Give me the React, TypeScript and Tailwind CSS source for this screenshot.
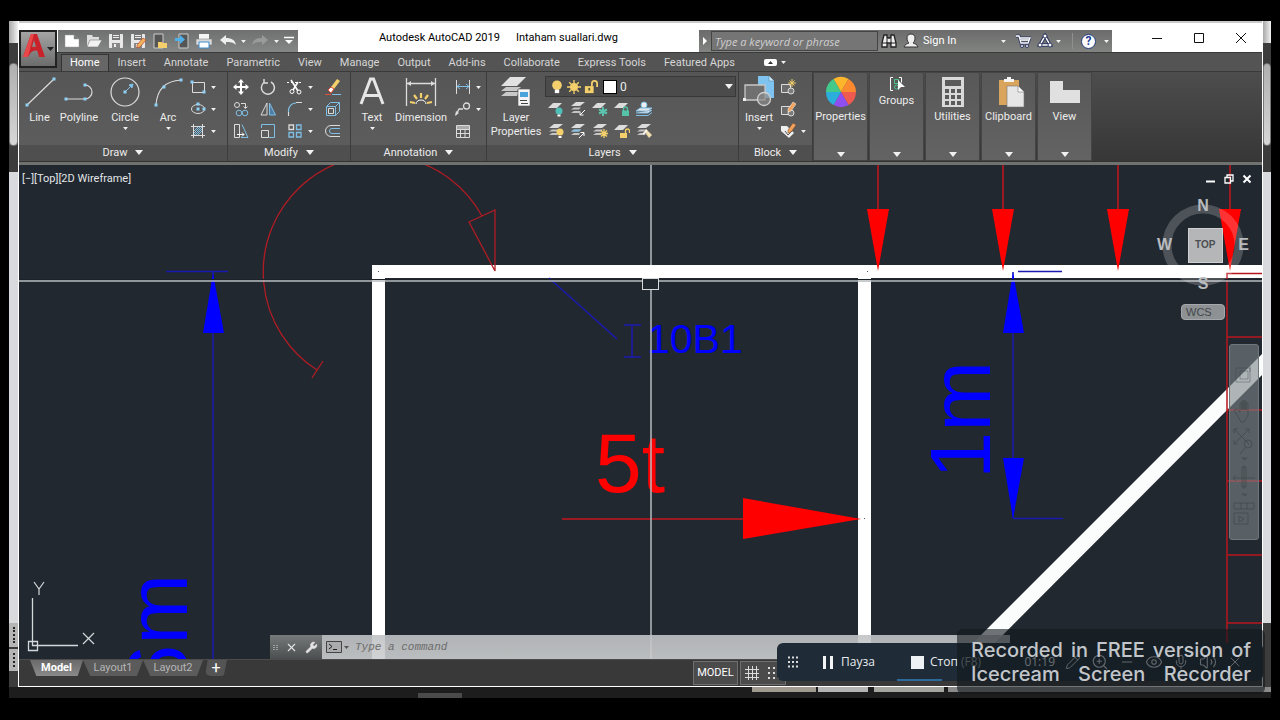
import { ReactNode } from "react";
import { Eye, Mic, Minus, Pencil, Volume2, Wrench, X, ZoomIn } from "lucide-react";

const LIGHT = "#dcdcdc";
const BLUE = "#7fbfe6";
const YELLOW = "#f5cf6b";

function Icon({
  size = 16,
  box = size,
  children,
}: {
  size?: number;
  box?: number;
  children: ReactNode;
}) {
  return (
    <svg
      width={size}
      height={size}
      viewBox={`0 0 ${box} ${box}`}
      fill="none"
      stroke={LIGHT}
      strokeWidth="1"
      className="shrink-0"
      aria-hidden="true"
    >
      {children}
    </svg>
  );
}

function Caret({ wide = false }: { wide?: boolean }) {
  return (
    <svg
      width={wide ? 8 : 5}
      height={wide ? 5 : 3}
      viewBox="0 0 8 5"
      className="shrink-0"
      aria-hidden="true"
    >
      <path d="M0 0h8L4 5z" fill="#f2f2f2" />
    </svg>
  );
}

/* ---------- quick access icons ---------- */

const floppy = (
  <>
    <path d="M1.500 1.500h13v13h-13z" fill="#e8e8e8" stroke="#e8e8e8" />
    <path d="M4 1h8v6H4z" fill="#777" stroke="none" />
    <path d="M5 2.500h6M5 4.500h6" stroke="#eee" />
    <path d="M4 10h8v5H4z" fill="#888" stroke="none" />
    <path d="M6 11h2v3H6z" fill="#eee" stroke="none" />
  </>
);

const quickIcons = [
  {
    label: "New",
    icon: <path d="M1 2h9l5 4v8H1z M10 2v4h5" fill="#fff" stroke="#999" strokeWidth=".5" />,
  },
  {
    label: "Open",
    icon: (
      <>
        <path d="M1 13V2h5l1 2h6v3" fill="#ddd" stroke="none" />
        <path d="M1 14l3-7h12l-4 7z" fill="#f2f2f2" stroke="#777" strokeWidth=".6" />
      </>
    ),
  },
  { label: "Save", icon: floppy },
  {
    label: "Save As",
    icon: (
      <>
        {floppy}
        <path d="M7 12l6-7 3 2-6 7-3 1z" fill="#f2b25c" stroke="#b5462f" strokeWidth=".7" />
      </>
    ),
  },
  {
    label: "Open from mobile",
    icon: (
      <>
        <path d="M2 1h9v14H2z" fill="#555" stroke="#ccc" />
        <path d="M6 9h4l1 1h4v5H6z" fill={YELLOW} stroke="none" />
      </>
    ),
  },
  {
    label: "Save to mobile",
    icon: (
      <>
        <path d="M5 1h9v14H5z" fill="#555" stroke="#ccc" />
        <path d="M1 5h5V2l5 4.500L6 11V8H1z" fill="#4fb0ea" stroke="none" />
      </>
    ),
  },
  {
    label: "Plot",
    icon: (
      <>
        <path d="M3 1h10v5H3z" fill="#f5f5f5" stroke="none" />
        <path d="M0 6h16v6H0z" fill="#d8d8d8" stroke="#777" strokeWidth=".5" />
        <path d="M3 9h10v6H3z" fill="#fff" stroke="#3f8fd0" />
      </>
    ),
  },
];

/* ---------- ribbon icons ---------- */

const node = (x: number, y: number) => (
  <rect x={x - 1.5} y={y - 1.5} width="3" height="3" fill="#8fd0f5" stroke="none" />
);

const lineIcon = (
  <Icon size={32}>
    <path d="M3 29L30 3" strokeWidth="1.200" />
    {node(3, 29)}
    {node(30, 3)}
  </Icon>
);
const polylineIcon = (
  <Icon size={32}>
    <path d="M3 23h19M22 23a7 7 0 0 0 0-14" strokeWidth="1.200" />
    {node(3, 23)}
    {node(22, 23)}
    {node(22, 9)}
  </Icon>
);
const circleIcon = (
  <Icon size={32}>
    <circle cx="16" cy="16" r="14" strokeWidth="1.200" />
    <path d="M16 16l6-6" stroke={BLUE} />
    <path d="M24 8l-1 4-3-3z" fill={BLUE} stroke={BLUE} />
    {node(16, 16)}
  </Icon>
);
const arcIcon = (
  <Icon size={32}>
    <path d="M4 29C5 14 12 5 29 4" strokeWidth="1.200" />
    {node(4, 29)}
    {node(12, 11)}
    {node(29, 4)}
  </Icon>
);

const drawTools = [
  {
    label: "Rectangle",
    icon: (
      <>
        <path d="M2.500 3.500h12v10h-12z" />
        {node(2, 3)}
        {node(14, 13)}
      </>
    ),
  },
  {
    label: "Ellipse",
    icon: (
      <>
        <ellipse cx="8" cy="8" rx="6.500" ry="4.500" />
        {node(8, 8)}
        {node(14, 8)}
        {node(8, 3)}
      </>
    ),
  },
  {
    label: "Hatch",
    icon: (
      <>
        <path d="M3.500 1v14M12.500 1v14M1 3.500h14M1 12.500h14" />
        <path d="M4 8l4-4M4 12l8-8M8 12l4-4M4 10l6-6M6 12l6-6" stroke={BLUE} />
      </>
    ),
  },
];

const modifyTools = [
  {
    label: "Move",
    icon: (
      <path
        d="M8 0l3 3.500H9V7h3.500V5L16 8l-3.500 3V9H9v3.500h2L8 16l-3-3.500h2V9H3.500v2L0 8l3.500-3v2H7V3.500H5z"
        fill="#fff"
        stroke="none"
      />
    ),
  },
  {
    label: "Rotate",
    icon: <path d="M4 3.500A6.500 6.500 0 1 0 11 3M4 0v4h4" strokeWidth="1.500" />,
  },
  {
    label: "Trim",
    caret: true,
    icon: (
      <>
        <path d="M0 3.500h15" strokeDasharray="2 2" stroke="#fff" />
        <path d="M4 1l7 11M11 3L6 11" stroke="#fff" strokeWidth="1.600" />
        <circle cx="5" cy="12.500" r="2" stroke="#fff" />
        <circle cx="12" cy="13" r="2" stroke="#fff" />
      </>
    ),
  },
  {
    label: "Erase",
    icon: (
      <>
        <path d="M6 8l6-8 3 2-6 8z" fill={YELLOW} stroke="none" />
        <path d="M3 11l3-3 3 2-3 4z" fill="#fff" stroke="#e0503c" />
        <path d="M0 15.500h6" stroke="#e0503c" />
        <path d="M7 15.500h9" stroke={BLUE} />
      </>
    ),
  },
  {
    label: "Copy",
    icon: (
      <>
        <circle cx="4" cy="4" r="2.500" />
        <circle cx="6" cy="12" r="2.800" stroke={BLUE} />
        <circle cx="12" cy="12" r="2.800" stroke={BLUE} />
        <path d="M8 2.500h4.500V7M10.500 5.500l2 2 2-2" />
      </>
    ),
  },
  {
    label: "Mirror",
    icon: (
      <>
        <path d="M7 2v12H1z" />
        <path d="M9.500 2v12h6z" stroke={BLUE} fill="#4c7fa3" />
      </>
    ),
  },
  {
    label: "Fillet",
    caret: true,
    icon: (
      <>
        <path d="M1.500 15V10C1.500 5 5 2 9 2" stroke={BLUE} strokeWidth="1.200" />
        <path d="M9 1.500h6M1.500 15v-4" />
      </>
    ),
  },
  {
    label: "Explode",
    icon: (
      <>
        <path d="M1.500 5.500h9v9h-9zM1.500 5.500l4-4h9l-4 4M14.500 1.500v9l-4 4" stroke={BLUE} />
        <path d="M3.500 7.500h5v5h-5z" />
      </>
    ),
  },
  {
    label: "Stretch",
    icon: (
      <>
        <path d="M1.500 1.500h5v13h-5z" />
        <path d="M9 1.500l6 13H8" stroke={BLUE} />
        <path d="M4 11.500h7M9 9.500l2 2-2 2" stroke="#fff" />
      </>
    ),
  },
  {
    label: "Scale",
    icon: (
      <>
        <path d="M1.500 5V1.500h13v13H9" stroke={BLUE} />
        <path d="M1.500 7.500h7v7h-7z" />
      </>
    ),
  },
  {
    label: "Array",
    caret: true,
    icon: (
      <>
        <path d="M2 2h4.500v4.500H2z" strokeWidth="1.300" />
        <path d="M9.500 2H14v4.500H9.500zM2 9.500h4.500V14H2zM9.500 9.500H14V14H9.500z" stroke={BLUE} strokeWidth="1.300" />
      </>
    ),
  },
  {
    label: "Offset",
    icon: (
      <>
        <path d="M15 2.500H6a5.500 5.500 0 0 0 0 11h9" />
        <path d="M15 5.500H7a2.500 2.500 0 0 0 0 5h8" stroke={BLUE} />
      </>
    ),
  },
];

const textIcon = (
  <Icon size={32}>
    <path
      d="M5 28L14.500 3h3L27 28M9 19.500h14"
      stroke="#e6e6e6"
      strokeWidth="3"
    />
  </Icon>
);
const dimensionIcon = (
  <Icon size={32}>
    <path d="M1.500 2v28M30.500 2v28M2 7.500h28" strokeWidth="1.300" />
    <path d="M2 7.500l4-2.500v5zM30 7.500l-4-2.500v5z" fill={LIGHT} stroke="none" />
    <path d="M16 17v5M9 19l3 4M23 19l-3 4M5 26l5 1M27 26l-5 1" stroke={YELLOW} strokeWidth="2.200" />
    <path d="M11 28a5 4 0 0 1 10 0" stroke="#fff" />
  </Icon>
);

const annotationTools = [
  {
    label: "Linear",
    caret: true,
    icon: (
      <>
        <path d="M1.500 1v14M14.500 1v14" />
        <path d="M2 7.500h12M5 5L2 7.500 5 10M11 5l3 2.500-3 2.500" stroke={BLUE} />
      </>
    ),
  },
  {
    label: "Leader",
    caret: true,
    icon: (
      <>
        <path d="M1 14l3-6h4" strokeWidth="1.300" />
        <circle cx="11.500" cy="5" r="3" strokeWidth="1.300" />
        <path d="M0 15l1-5 3 2z" fill={LIGHT} stroke="none" />
      </>
    ),
  },
  {
    label: "Table",
    icon: (
      <>
        <path d="M1.500 2.500h13v12h-13zM1.500 6.500h13M1.500 10.500h13M5.500 6v8M10 6v8" />
        <path d="M2 3h12v3H2z" fill="#aaa" stroke="none" />
      </>
    ),
  },
];

const layerPropertiesIcon = (
  <Icon size={32}>
    <path d="M10 1h16l-9 9H1z" fill="#e2e2e2" stroke="none" />
    <path d="M6 11h15l-4 4H1zM6 16h13l-2 4H1z" fill="#c8c8c8" stroke="none" />
    <path d="M18 13h12v17H18z" fill="#f4f4f4" stroke="#555" strokeWidth=".6" />
    <path d="M20 16h8v5h-8z" fill="#4ba3dc" stroke="none" />
    <path d="M20 24.500h7M21 27.500h7" stroke="#444" />
  </Icon>
);

const sheet = <path d="M5 2h9l-5 5H0z" fill="#dcdcdc" stroke="none" />;
const stack = (
  <>
    <path d="M6 1h9l-5 4H1z" fill="#dcdcdc" stroke="none" />
    <path d="M4 6.500h7L9 8.500H1zM4 10h6l-1 2H1z" fill="#c4c4c4" stroke="none" />
  </>
);

const layerTools = [
  {
    label: "Layer off",
    icon: (
      <>
        {sheet}
        <circle cx="11" cy="10" r="3.500" fill="#4fc0b8" stroke="none" />
        <path d="M9.500 14.500h3" stroke="#fff" strokeWidth="2" />
      </>
    ),
  },
  {
    label: "Isolate",
    icon: (
      <>
        {stack}
        <path d="M15 9l-5 5M10 10.500V14h3.500" stroke="#fff" />
      </>
    ),
  },
  {
    label: "Freeze",
    icon: (
      <>
        {sheet}
        <path d="M11 6v9M7 8.500l8 4M15 8.500l-8 4" stroke="#5cc4ae" strokeWidth="2" />
      </>
    ),
  },
  {
    label: "Lock",
    icon: (
      <>
        {sheet}
        <path d="M8 9.500h7V15H8z" fill="#56c2a8" stroke="none" />
        <path d="M9.500 10V8a2 2 0 0 1 4 0v2" stroke="#56c2a8" strokeWidth="1.300" />
      </>
    ),
  },
  {
    label: "Make current",
    icon: (
      <>
        <path d="M4 7h12l-4 3H0zM0 12h12l4-3" fill="#e6e6e6" stroke={BLUE} />
        <path d="M0 14.500h12l4-3" stroke={BLUE} />
        <circle cx="8" cy="4" r="3" fill="#eee" stroke={BLUE} />
      </>
    ),
  },
  {
    label: "Turn all on",
    icon: (
      <>
        {stack}
        <circle cx="12" cy="9" r="3.500" fill={YELLOW} stroke="none" />
        <path d="M10.500 14h3" stroke="#fff" strokeWidth="2" />
      </>
    ),
  },
  {
    label: "Unisolate",
    icon: (
      <>
        {stack}
        <path d="M4 6.500h7L9 8.500H1z" fill={BLUE} stroke="none" />
        <path d="M9 15l5-5M10.500 9.500H14V13" stroke="#fff" />
      </>
    ),
  },
  {
    label: "Thaw all",
    icon: (
      <>
        {stack}
        <path d="M12 6v9M7.500 10.500h9M9 7.500l6 6M15 7.500l-6 6" stroke={YELLOW} strokeWidth="1.300" />
      </>
    ),
  },
  {
    label: "Unlock",
    icon: (
      <>
        {sheet}
        <path d="M6 10h7v5H6z" fill={YELLOW} stroke="none" />
        <path d="M11.500 10V8a2 2 0 0 1 4 0v2" stroke={YELLOW} strokeWidth="1.300" />
      </>
    ),
  },
  {
    label: "Match layer",
    icon: (
      <>
        {stack}
        <path d="M8 8l2-2 6 6-3 3z" fill="#f0e0b0" stroke="#a98" strokeWidth=".6" />
        <path d="M7 11l4-4" stroke="#fff" strokeWidth="1.500" />
      </>
    ),
  },
];

const insertIcon = (
  <Icon size={32}>
    <path d="M15 0h11l5 5v17H15z" fill="#7fc4f0" stroke="none" />
    <path d="M26 0v5h5" fill="#cfe9fa" stroke="#4b86ad" strokeWidth=".6" />
    <path d="M2 9h20v15H2z" fill="#707070" stroke="#c8c8c8" strokeWidth="1.300" />
    <circle cx="21" cy="23" r="6.500" fill="#8a8a8a" fillOpacity=".7" stroke="#d0d0d0" strokeWidth="1.300" />
    <rect x="0" y="22" width="3" height="3" fill="#eee" stroke="none" />
  </Icon>
);

const blockBase = (
  <>
    <path d="M1.500 5.500h9v8h-9z" fill="#6c6c6c" />
    <circle cx="11" cy="12" r="3" fill="#7b7b7b" />
  </>
);
const blockTools = [
  {
    label: "Create block",
    icon: (
      <>
        {blockBase}
        <path d="M12 0v8M8 4h8M9.500 1.500l5 5M14.500 1.500l-5 5" stroke={YELLOW} />
      </>
    ),
  },
  {
    label: "Edit block",
    icon: (
      <>
        {blockBase}
        <path d="M8 8l5-7 3 2-5 7-3 1z" fill="#f2a25c" stroke="#fff" strokeWidth=".5" />
      </>
    ),
  },
  {
    label: "Edit attributes",
    caret: true,
    icon: (
      <>
        <path d="M1 3h6l7 7-5 5-8-7z" fill="#eee" stroke="none" />
        <path d="M5 8l3 4 4-4" stroke="#555" />
        <path d="M8 7l5-7 3 2-5 7-3 1z" fill="#f2a25c" stroke="#7b4a20" strokeWidth=".5" />
      </>
    ),
  },
];

const wheelColors = ["#fdb52b", "#fd8a2e", "#ee5a4f", "#8f4ff0", "#2baedb", "#43c98a"];
const wheelPaths = [
  "M16 16L8.500 3A15 15 0 0 1 23.500 3z",
  "M16 16L23.500 3A15 15 0 0 1 31 16z",
  "M16 16H31A15 15 0 0 1 23.500 29z",
  "M16 16L23.500 29A15 15 0 0 1 8.500 29z",
  "M16 16L8.500 29A15 15 0 0 1 1 16z",
  "M16 16H1A15 15 0 0 1 8.500 3z",
];

const collapsedPanels = [
  {
    label: "Properties",
    icon: (
      <Icon size={32}>
        {wheelPaths.map((d, i) => (
          <path key={d} d={d} fill={wheelColors[i]} stroke="none" />
        ))}
      </Icon>
    ),
  },
  {
    label: "Groups",
    icon: (
      <Icon size={16}>
        <path d="M4 1.500H1.500v13H4M10 1.500h2.500v5" stroke="#fff" />
        <path d="M5.500 3.500h4v4h-4z" stroke="#4cc38a" />
        <circle cx="7.500" cy="11" r="2" stroke="#4cc38a" />
        <path d="M9 4l7 7h-4l-3 3z" fill="#fff" stroke="none" />
      </Icon>
    ),
  },
  {
    label: "Utilities",
    icon: (
      <Icon size={32}>
        <path d="M5 1h22v30H5z" fill="#d9d9d9" stroke="none" />
        <path d="M8 4h16v6H8z" fill="#5a5a5a" stroke="none" />
        <path d="M8 15h16M8 21h16M8 27h16" stroke="#5a5a5a" strokeWidth="4" strokeDasharray="4 2" />
      </Icon>
    ),
  },
  {
    label: "Clipboard",
    icon: (
      <Icon size={32}>
        <path d="M6 4h20v25H6z" fill="#d9a45c" stroke="none" />
        <path d="M11 6V3h3V1h4v2h3v3z" fill="#f4f4f4" stroke="none" />
        <path d="M14 10h11l6 6v15H14z" fill="#e6e6e6" stroke="#777" strokeWidth=".6" />
        <path d="M25 10v6h6" fill="#fff" stroke="#777" strokeWidth=".6" />
      </Icon>
    ),
  },
  {
    label: "View",
    icon: (
      <Icon size={32}>
        <path d="M1 5h13v9h17v13H1z" fill="#e0e0e0" stroke="none" />
      </Icon>
    ),
  },
];

const ribbonTabs = [
  "Home",
  "Insert",
  "Annotate",
  "Parametric",
  "View",
  "Manage",
  "Output",
  "Add-ins",
  "Collaborate",
  "Express Tools",
  "Featured Apps",
];

/* ---------- building blocks ---------- */

function BigTool({
  label,
  icon,
  width,
  caret = false,
}: {
  label: ReactNode;
  icon: ReactNode;
  width: string;
  caret?: boolean;
}) {
  return (
    <button className={`flex shrink-0 flex-col items-center pt-1 ${width}`}>
      {icon}
      <span className="pt-[3px] text-center leading-[14px] whitespace-nowrap">{label}</span>
      {caret && (
        <span className="pt-0.5">
          <Caret />
        </span>
      )}
    </button>
  );
}

function SmallTool({ label, icon, caret }: { label: string; icon: ReactNode; caret?: boolean }) {
  return (
    <button aria-label={label} className="flex h-[22px] items-center gap-[5px]">
      <Icon>{icon}</Icon>
      {caret && <Caret />}
    </button>
  );
}

function Panel({
  title,
  width,
  children,
}: {
  title: string;
  width: string;
  children: ReactNode;
}) {
  return (
    <section
      className={`flex shrink-0 flex-col border-r border-[#3c3c3c] bg-linear-to-b from-[#565656] to-[#5e5e5e] ${width}`}
    >
      <div className="flex h-[73px]">{children}</div>
      <button className="flex flex-1 items-center justify-center gap-2 bg-[#4f4f4f]">
        {title}
        <Caret wide />
      </button>
    </section>
  );
}

function TitleBar() {
  return (
    <header className="flex h-[29px] items-end bg-white pl-[39px]">
      <div className="flex h-[22px] w-60 shrink-0 items-center bg-linear-to-b from-[#6f7170] to-[#858786] pl-[3px]">
        {quickIcons.map((q) => (
          <button key={q.label} aria-label={q.label} className="flex w-[22px] shrink-0 justify-center">
            <Icon>{q.icon}</Icon>
          </button>
        ))}
        <button aria-label="Undo" className="flex w-[26px] justify-center">
          <Icon>
            <path d="M0 7l6-5v3c6 0 9 2 10 7-3-3-6-3-10-3v3z" fill="#eee" stroke="none" />
          </Icon>
        </button>
        <Caret />
        <button aria-label="Redo" className="flex w-7 justify-center">
          <Icon>
            <path d="M16 7l-6-5v3C4 5 1 7 0 12c3-3 6-3 10-3v3z" fill="#9a9a9a" stroke="none" />
          </Icon>
        </button>
        <Caret />
        <button aria-label="Customize" className="flex w-[19px] justify-center">
          <Icon size={10}>
            <path d="M0 1.500h10" stroke="#fff" strokeWidth="1.500" />
            <path d="M1 4h8L5 8z" fill="#fff" stroke="none" />
          </Icon>
        </button>
      </div>
      <h1 className="flex h-7 flex-1 items-center justify-center gap-4 whitespace-nowrap text-black">
        <span>Autodesk AutoCAD 2019</span>
        <span>Intaham suallari.dwg</span>
      </h1>
      <div className="flex h-[22px] shrink-0 items-center bg-linear-to-b from-[#6a6b6a] to-[#828482] text-white">
        <button aria-label="Collapse search" className="flex w-3 justify-center">
          <svg width="4" height="8" viewBox="0 0 4 8" aria-hidden="true">
            <path d="M0 0l4 4-4 4z" fill="#fff" />
          </svg>
        </button>
        <input
          aria-label="Search"
          placeholder="Type a keyword or phrase"
          className="h-5 w-[167px] border border-[#444] bg-[#757575] px-[3px] font-['Open_Sans',sans-serif] italic placeholder:text-[#cfcfcf]"
        />
        <button aria-label="Find" className="flex w-[22px] justify-center">
          <Icon>
            <path
              d="M3 2h3v3h4V2h3l2 8v4h-5v-4H6v4H1v-4z"
              fill="#eee"
              stroke="#222"
              strokeWidth="1.300"
            />
            <path d="M6 6v4M10 6v4M1 10h5M10 10h5" stroke="#222" />
          </Icon>
        </button>
        <button className="flex w-[92px] items-center gap-1 pl-[3px]">
          <Icon>
            <path
              d="M8 1c3 0 4 2 4 4 0 3-1 4-2 5 2 1 4 1 5 4H1c1-3 3-3 5-4-1-1-2-2-2-5 0-2 1-4 4-4z"
              fill="#eee"
              stroke="#333"
            />
          </Icon>
          Sign In
        </button>
        <span className="flex w-[22px] justify-center">
          <Caret />
        </span>
        <button aria-label="App Store" className="flex w-[18px] justify-center">
          <Icon>
            <path d="M1 3h3l2 7h7l2-5H5" stroke="#2c3560" strokeWidth="3" />
            <path d="M1 3h3l2 7h7l2-5H5M6 7h8" stroke="#fff" strokeWidth="1.300" />
            <circle cx="7" cy="13" r="1.500" fill="#fff" stroke="#2c3560" />
            <circle cx="12" cy="13" r="1.500" fill="#fff" stroke="#2c3560" />
          </Icon>
        </button>
        <button aria-label="Stay connected" className="flex w-[34px] items-center justify-center gap-[3px]">
          <Icon>
            <path d="M8 3l5 9H3z" stroke="#2c3560" strokeWidth="3.500" />
            <path d="M8 3l5 9H3z" stroke="#fff" strokeWidth="1.500" />
            <circle cx="8" cy="3" r="2" fill="#fff" stroke="#2c3560" />
            <circle cx="3" cy="12" r="2" fill="#fff" stroke="#2c3560" />
            <circle cx="13" cy="12" r="2" fill="#fff" stroke="#2c3560" />
          </Icon>
          <Caret />
        </button>
        <span className="ml-1.5 h-4 w-px bg-[#8f8f8f]" />
        <button
          aria-label="Help"
          className="mr-1 ml-2 flex size-[15px] items-center justify-center rounded-full border border-[#223a7a] bg-white text-xs font-bold text-[#1f3f9a]"
        >
          ?
        </button>
        <span className="flex w-3 justify-center">
          <Caret />
        </span>
      </div>
      <div className="flex h-7 shrink-0 items-center pl-6 text-black">
        <button aria-label="Minimize" className="flex w-[42px] justify-center">
          <Icon size={12}>
            <path d="M1 6.500h10" stroke="#111" />
          </Icon>
        </button>
        <button aria-label="Maximize" className="flex w-[42px] justify-center">
          <Icon size={12}>
            <path d="M1.500 1.500h9v9h-9z" stroke="#111" />
          </Icon>
        </button>
        <button aria-label="Close" className="flex w-[42px] justify-center">
          <Icon size={12}>
            <path d="M1 1l10 10M11 1L1 11" stroke="#111" />
          </Icon>
        </button>
      </div>
    </header>
  );
}

function Ribbon() {
  return (
    <>
      <nav className="flex h-5 items-end border-t border-b border-[#3a3a3a] bg-[#545454] pl-[42px] text-[#d6d6d6]">
        {ribbonTabs.map((tab) => (
          <button
            key={tab}
            className={
              tab === "Home"
                ? "h-[17px] border-x border-t border-[#333] bg-[#666] px-2 leading-4 text-white"
                : "h-[17px] px-[9px] leading-4 whitespace-nowrap"
            }
          >
            {tab}
          </button>
        ))}
        <button aria-label="Minimize ribbon" className="ml-5 flex h-[17px] items-center gap-1">
          <svg width="13" height="7" viewBox="0 0 13 7" aria-hidden="true">
            <rect width="13" height="7" rx="2" fill="#fff" />
            <path d="M4 5h5L6.500 2z" fill="#333" />
          </svg>
          <Caret />
        </button>
      </nav>
      <div className="flex h-[89px] bg-linear-to-b from-[#4d4d4d] to-[#373737] text-[#ececec]">
        <Panel title="Draw" width="w-[209px]">
          <BigTool label="Line" icon={lineIcon} width="w-[41px]" />
          <BigTool label="Polyline" icon={polylineIcon} width="w-[38px]" />
          <BigTool label="Circle" icon={circleIcon} width="w-[54px]" caret />
          <BigTool label="Arc" icon={arcIcon} width="w-[32px]" caret />
          <div className="flex flex-col pt-1 pl-1.5">
            {drawTools.map((t) => (
              <SmallTool key={t.label} {...t} caret />
            ))}
          </div>
        </Panel>
        <Panel title="Modify" width="w-[123px]">
          <div className="grid grid-cols-[27px_27px_38px_16px] content-start pt-1 pl-[5px]">
            {modifyTools.map((t) => (
              <SmallTool key={t.label} {...t} />
            ))}
          </div>
        </Panel>
        <Panel title="Annotation" width="w-[136px]">
          <BigTool label="Text" icon={textIcon} width="w-[42px]" caret />
          <BigTool label="Dimension" icon={dimensionIcon} width="w-[56px]" />
          <div className="flex flex-col pt-1 pl-1.5">
            {annotationTools.map((t) => (
              <SmallTool key={t.label} {...t} />
            ))}
          </div>
        </Panel>
        <Panel title="Layers" width="w-[252px]">
          <BigTool
            label={
              <>
                Layer
                <br />
                Properties
              </>
            }
            icon={layerPropertiesIcon}
            width="w-[58px]"
          />
          <div className="flex flex-1 flex-col pt-1 pr-0.5">
            <div className="flex h-[21px] items-center gap-[3px] border border-[#383838] bg-[#4b4b4b] pl-1">
              <Icon size={14} box={16}>
                <circle cx="8" cy="6" r="5.500" fill={YELLOW} stroke="none" />
                <path d="M5.500 13h5" stroke="#fff" strokeWidth="4" />
              </Icon>
              <Icon size={14} box={16}>
                <circle cx="8" cy="8" r="4.500" fill={YELLOW} stroke="none" />
                <path d="M8 0v16M0 8h16M2.500 2.500l11 11M13.500 2.500l-11 11" stroke={YELLOW} strokeWidth="1.500" />
              </Icon>
              <Icon size={14} box={16}>
                <path d="M1 7h10v8H1z" fill={YELLOW} stroke="none" />
                <path d="M9 7V4a3 3 0 0 1 6 0v4" stroke={YELLOW} strokeWidth="2" />
                <path d="M6 9v3" stroke="#553" strokeWidth="2" />
              </Icon>
              <span className="ml-0.5 size-3.5 shrink-0 border border-black bg-white" />
              <select aria-label="Layer" className="flex-1 appearance-none bg-transparent text-xs">
                <option>0</option>
              </select>
              <span className="pr-0.5">
                <Caret wide />
              </span>
            </div>
            <div className="grid grid-cols-[repeat(5,22px)] pt-px pl-[3px]">
              {layerTools.map((t) => (
                <SmallTool key={t.label} {...t} />
              ))}
            </div>
          </div>
        </Panel>
        <Panel title="Block" width="w-[74px]">
          <BigTool label="Insert" icon={insertIcon} width="w-[40px]" caret />
          <div className="flex flex-col pt-1 pl-px">
            {blockTools.map((t) => (
              <SmallTool key={t.label} {...t} />
            ))}
          </div>
        </Panel>
        {collapsedPanels.map((p) => (
          <button
            key={p.label}
            className="mr-px flex w-[55px] shrink-0 flex-col items-center border border-[#454545] bg-linear-to-b from-[#585858] to-[#636363] pt-[3px] pb-[3px]"
          >
            {p.icon}
            <span className="pt-px leading-4">{p.label}</span>
            <span className="mt-auto flex">
              <Caret wide />
            </span>
          </button>
        ))}
      </div>
      <div className="h-1 border-t border-[#333] bg-[#707270]" />
    </>
  );
}

function LoadArrow({ x }: { x: number }) {
  return (
    <g>
      <path d={`M${x} 165V210`} stroke="#c4141c" strokeWidth="1.500" />
      <path d={`M${x - 11} 209h22L${x} 271z`} fill="#ff0000" />
    </g>
  );
}

function Drawing() {
  return (
    <svg
      className="absolute inset-0 h-full w-full"
      viewBox="19 165 1243 494"
      preserveAspectRatio="xMinYMin slice"
      fill="none"
      fontFamily="'Liberation Sans', Arial, sans-serif"
    >
      {/* frame members */}
      <path d="M1262 354L957 659H979L1262 375z" fill="#fbfdfd" />
      <path d="M372 265H1262V278H871V659H858V278H385V659H372z" fill="#fff" />
      <path d="M378 271h1v1h-1zM867 271h1v1h-1zM864 518h1v1h-1z" fill="#555" />

      {/* moment */}
      <g stroke="#b01c24" strokeWidth="1.300">
        <path d="M317 370A116.500 116.500 0 1 1 482 216" />
        <path d="M469 222L495 210V271z" />
        <path d="M312 378L323 361" />
      </g>

      {/* distributed load */}
      {[878, 1003, 1118, 1230].map((x) => (
        <LoadArrow key={x} x={x} />
      ))}
      <path
        d="M1227 659V273.500H1262M1227 337h35M1227 410h35M1227 481h35M1227 555h35M1227 623h35"
        stroke="#b8161e"
        strokeWidth="1.500"
      />

      {/* horizontal load */}
      <path d="M562 519H744" stroke="#c4141c" strokeWidth="1.500" />
      <path d="M743 498V539L861 519z" fill="#ff0000" />
      <text x="595" y="492" fontSize="84" fill="#ff0000">
        5t
      </text>

      {/* dimensions */}
      <g stroke="#1a1ab0" strokeWidth="1.500">
        <path d="M166 271.500H228M213 272V659" />
        <path d="M1018 271.500H1062M1013 272V518M1013 518.500H1063" />
        <path d="M549 278L617 339" />
        <path d="M624 325H641M632 326V357M624 357H641" />
      </g>
      <g fill="#0000ff">
        <path d="M213 273L224 333H203z" />
        <path d="M1013 272L1024 333H1003z" />
        <path d="M1013 519L1024 458H1003z" />
        <text x="647" y="353" fontSize="41">
          10B1
        </text>
        <text transform="translate(990 479) rotate(-90)" fontSize="85">
          1m
        </text>
        <text transform="translate(187 692) rotate(-90)" fontSize="85">
          6m
        </text>
      </g>

      {/* crosshair */}
      <path d="M19 279.500H1262" stroke="#1b2126" />
      <path d="M19 281H1262M651 165V265M651 290V659" stroke="#b8bcbe" strokeWidth="1.500" />
      <rect x="642.500" y="278.500" width="16" height="11" fill="#212830" stroke="#d8dadb" />

      {/* UCS icon */}
      <g stroke="#d5d8da">
        <path d="M32.500 598V645.500H78M28.500 641.500h9v9h-9z" strokeWidth="1.300" />
        <path d="M34 582l5 7 5-7M39 589v6M83 633l11 11M94 633l-11 11" strokeWidth="1.200" />
      </g>
    </svg>
  );
}

function ViewCube() {
  return (
    <div className="absolute top-[33px] right-[11px] flex w-24 flex-col items-center font-['Liberation_Sans',Arial,sans-serif] text-base leading-4 font-bold text-[#b9bcbf]">
      <svg className="absolute top-1.5 left-[7px]" width="82" height="82" aria-hidden="true">
        <circle cx="41" cy="41" r="36" fill="none" stroke="#fff" strokeOpacity=".2" strokeWidth="9" />
      </svg>
      <span className="relative">N</span>
      <div className="relative flex h-[62px] w-full items-center justify-between px-0.5">
        <span>W</span>
        <button className="size-[35px] border border-[#d0d0d0] bg-[#b4b6b8] text-[10px] text-[#4c4f52]">
          TOP
        </button>
        <span>E</span>
      </div>
      <span className="relative">S</span>
      <button className="mt-3 h-4 w-11 rounded-[4px] border border-[#a5a8aa] bg-[#8d9194] pl-1 text-left text-[11px] leading-3 font-normal text-[#42474b]">
        WCS
      </button>
    </div>
  );
}

function NavigationBar() {
  return (
    <div className="absolute top-[179px] right-[3px] flex h-[196px] w-[30px] flex-col items-center justify-center rounded-[3px] border border-[#6f777a] bg-[#7d8588]/60">
      <svg
        width="28"
        height="180"
        viewBox="0 0 28 180"
        fill="none"
        stroke="#3f474c"
        strokeOpacity=".7"
        aria-hidden="true"
      >
        <path d="M6 16h14v14H6zM10 19h8v8h-8zM20 14v6" strokeOpacity=".4" />
        <path d="M7 63l-3-5 3-1 3 3V51h2v7-9h2v9-9h2v9-7h2v13l-4 6H11z" />
        <path d="M4 77l15 15M19 77L4 92M4 81v-4h4M19 81v-4h-4M4 88v4h4" />
        <circle cx="18" cy="92" r="4" />
        <path d="M15 96l-5 6" />
        <path d="M12 106h5l-2 2z" />
        <path d="M14 113v24M12 115h4v20h-4zM3 126h22M6 123l-3 3 3 3" />
        <path d="M12 142h5l-2 2z" />
        <path d="M4 151h20v6H4zM11 151v6M17 151v6M4 161h14v11H4zM9 164v6l5-3z" />
      </svg>
    </div>
  );
}

function CommandLine() {
  return (
    <div className="absolute bottom-0 left-[251px] flex h-6 w-[740px] items-stretch font-['Liberation_Mono',monospace]">
      <div className="flex w-[52px] items-center gap-[7px] bg-linear-to-b from-[#777a7a] to-[#4c4f50] pl-[3px] text-[#e4e4e4]">
        <Icon size={5} box={5}>
          <path d="M1 0v5M4 0v5" strokeDasharray="1 1" />
        </Icon>
        <button aria-label="Close command line">
          <X size={13} />
        </button>
        <button aria-label="Customize command line">
          <Wrench size={13} fill="#e4e4e4" strokeWidth={1} />
        </button>
      </div>
      <label className="flex flex-1 items-center gap-[5px] bg-linear-to-b from-[#c0c2c4]/90 to-[#cccecf]/90 pl-1">
        <svg width="24" height="14" viewBox="0 0 24 14" fill="none" aria-hidden="true">
          <path d="M.5 1.500h15v11H.5z" fill="#a9abad" stroke="#444" />
          <path d="M3 4l3 2.500L3 9M7 9.500h4" stroke="#222" />
          <path d="M18 6h5l-2.500 3z" fill="#555" />
        </svg>
        <input
          aria-label="Command"
          placeholder="Type a command"
          className="flex-1 bg-transparent italic placeholder:text-[#6c6c6c]"
        />
      </label>
    </div>
  );
}

function StatusBar() {
  return (
    <footer className="flex h-[27px] items-start border-t border-[#4c4c4c] bg-[#393939] pl-[11px] text-[#b5b5b5]">
      <button className="h-4 w-[53px] rounded-b-md bg-linear-to-b from-[#6a6a6a] to-[#8a8a8a] leading-4 font-bold text-white [clip-path:polygon(0_0,100%_0,90%_100%,12%_100%)]">
        Model
      </button>
      <button className="h-4 w-[60px] rounded-b-md bg-[#5b5b5b] leading-4 [clip-path:polygon(0_0,100%_0,90%_100%,12%_100%)]">
        Layout1
      </button>
      <button className="h-4 w-[60px] rounded-b-md bg-[#5b5b5b] leading-4 [clip-path:polygon(0_0,100%_0,90%_100%,12%_100%)]">
        Layout2
      </button>
      <button
        aria-label="New layout"
        className="ml-0.5 h-4 w-[22px] rounded-b-md bg-[#545454] text-base leading-4 text-white [clip-path:polygon(12%_0,100%_0,85%_100%,0_100%)]"
      >
        +
      </button>
      <div className="ml-[466px] flex h-full items-center gap-0.5">
        <button className="h-6 w-[45px] border border-[#6f6f6f] bg-[#4b4b4b] text-white">
          MODEL
        </button>
        <div className="flex h-6 items-center gap-2 border border-[#6f6f6f] bg-[#4b4b4b] px-1">
          <button aria-label="Grid">
            <Icon size={14} box={14}>
              <path d="M3.500 0v14M7.500 0v14M11.500 0v14M0 3.500h14M0 7.500h14M0 11.500h14" />
            </Icon>
          </button>
          <button aria-label="Snap">
            <Icon size={14} box={14}>
              <path d="M1 2h13M1 7h13M1 12h13" strokeWidth="2" strokeDasharray="2 3" />
            </Icon>
          </button>
        </div>
      </div>
    </footer>
  );
}

/* Floating screen recorder bar and its watermark, above every window */
function Recorder() {
  return (
    <>
      <div className="absolute right-2 bottom-[17px] flex h-[38px] w-[486px] items-center rounded-md bg-[#1f2b36] pl-[9px] font-['Open_Sans',sans-serif] text-xs text-[#e6eaee]">
        <Icon size={12} box={12}>
          <path d="M2 1.500h10M2 6h10M2 10.500h10" strokeWidth="2" strokeDasharray="2 2" />
        </Icon>
        <button className="ml-[25px] flex w-[84px] items-center gap-2">
          <svg width="10" height="13" viewBox="0 0 10 13" aria-hidden="true">
            <path d="M0 0h3v13H0zM7 0h3v13H7z" fill="#f2f4f6" />
          </svg>
          Пауза
        </button>
        <button className="ml-1 flex items-center gap-1.5">
          <span className="size-[13px] bg-[#eef1f4]" />
          <span>
            Стоп <span className="text-[#9aa2a8]">(F8)</span>
          </span>
        </button>
        <span className="ml-auto pr-2.5">01:19</span>
        <div className="flex items-center gap-2.5 pr-5 text-[#d8dde1]">
          <button aria-label="Draw">
            <Pencil size={16} strokeWidth={1.5} />
          </button>
          <button aria-label="Zoom in">
            <ZoomIn size={18} strokeWidth={1.5} />
          </button>
          <button aria-label="Zoom out">
            <Minus size={16} strokeWidth={1.5} />
          </button>
          <button aria-label="Webcam">
            <Eye size={18} strokeWidth={1.5} />
          </button>
          <button aria-label="Microphone">
            <Mic size={16} strokeWidth={1.5} />
          </button>
          <button aria-label="Sound">
            <Volume2 size={18} strokeWidth={1.5} />
          </button>
          <button aria-label="Close recorder">
            <X size={16} strokeWidth={1.5} />
          </button>
        </div>
        <span className="absolute bottom-0 left-[120px] h-0.5 w-[45px] bg-[#2c6a9c]" />
      </div>
      <div className="absolute right-1.5 bottom-1 flex h-[65px] w-[308px] flex-col justify-center rounded-md bg-[#10171c]/60 px-[14px] font-['Inter',sans-serif] text-[20px] leading-6 font-medium text-[#c2c6ca]">
        <p className="flex justify-between whitespace-nowrap">
          <span>Recorded</span>
          <span>in</span>
          <span>FREE</span>
          <span>version</span>
          <span>of</span>
        </p>
        <p className="flex justify-between whitespace-nowrap">
          <span>Icecream</span>
          <span>Screen</span>
          <span>Recorder</span>
        </p>
      </div>
    </>
  );
}

function BackgroundEdge({ left = false }: { left?: boolean }) {
  return (
    <div className={`flex shrink-0 flex-col bg-[#3c3c3c] ${left ? "w-[9px]" : "w-2"}`}>
      <div className="h-[22px] bg-linear-to-r from-[#a8a8a8] to-[#f2f2f2]" />
      <div className="mt-5 h-[83px] rounded-sm border border-[#777] bg-linear-to-b from-[#b0b0b0] to-[#d6d6d6]" />
      <div className="mt-[26px] flex-1 bg-[#d9dadd]" />
      {left && (
        <>
          <div className="mb-0.5 flex h-6 justify-center bg-[#b5b5b5] py-1">
            <span className="border-l-2 border-dotted border-[#222]" />
          </div>
          <div className="flex h-[22px] justify-center bg-[#b5b5b5] py-1">
            <span className="border-l-2 border-dotted border-[#222]" />
          </div>
        </>
      )}
      <div className={left ? "h-4" : "h-[64px]"} />
    </div>
  );
}

export default function App() {
  return (
    <div className="flex min-h-screen flex-col bg-black pt-[21px] pr-[9px] pb-[22px] pl-[9px] font-['Roboto','Open_Sans',sans-serif] text-[11px]">
      <div className="relative flex flex-1 flex-col">
        <div className="flex flex-1">
          <BackgroundEdge left />
          <div className="relative flex min-w-0 flex-1 flex-col border-x border-b border-white bg-[#393939]">
            <div className="h-0.5 bg-[#c9c9c9]" />
            <TitleBar />
            <button
              aria-label="Application menu"
              className="absolute top-[9px] left-0 z-10 flex h-[38px] w-[38px] items-start border-2 border-[#222] bg-linear-to-b from-[#a4a4a4] to-[#6c6c6c]"
            >
              <svg width="34" height="32" viewBox="0 0 34 32" aria-hidden="true">
                <path d="M2 25L10 2h6l8 23h-6l-1.500-6c-3-1-5 0-7 2L7 25z" fill="#c9222a" />
                <path d="M10 2h3L7 25H2z" fill="#e8474a" />
                <path d="M11 15l2-7 2 7c-1-.5-3-.5-4 0z" fill="#8c8c8c" />
                <path d="M26 15h7l-3.500 4z" fill="#222" />
              </svg>
            </button>
            <Ribbon />
            <main className="relative flex-1 overflow-hidden bg-[#212830]">
              <Drawing />
              <div className="relative flex items-center justify-between px-[3px] pt-1.5 pr-2.5 text-[#e2e5e7]">
                <button>[−][Top][2D Wireframe]</button>
                <div className="flex gap-2">
                  <button aria-label="Minimize viewport">
                    <Icon size={10} box={10}>
                      <path d="M0 7.500h9" stroke="#fff" strokeWidth="2" />
                    </Icon>
                  </button>
                  <button aria-label="Restore viewport">
                    <Icon size={10} box={10}>
                      <path d="M1 3.500h5.500V9H1zM3 3V1h6v6H7" stroke="#fff" strokeWidth="1.300" />
                    </Icon>
                  </button>
                  <button aria-label="Close viewport">
                    <Icon size={10} box={10}>
                      <path d="M1.500 1.500l7 7M8.500 1.500l-7 7" stroke="#fff" strokeWidth="2" />
                    </Icon>
                  </button>
                </div>
              </div>
              <ViewCube />
              <NavigationBar />
              <CommandLine />
            </main>
            <StatusBar />
          </div>
          <BackgroundEdge />
        </div>
        <div className="flex h-[11px] bg-[#1d1d1d]">
          <span className="mt-1.5 ml-[409px] h-[5px] w-11 bg-[#4a4a4a]" />
          <span className="ml-[290px] h-[5px] w-16 bg-[#a09a90]" />
          <span className="ml-0.5 h-[5px] w-[50px] bg-[#b4b4b4]" />
          <span className="ml-1.5 h-[5px] w-[70px] bg-[#a5a5a0]" />
          <span className="ml-1 h-[5px] flex-1 bg-[#8a8a8a]" />
        </div>
        <Recorder />
      </div>
    </div>
  );
}
